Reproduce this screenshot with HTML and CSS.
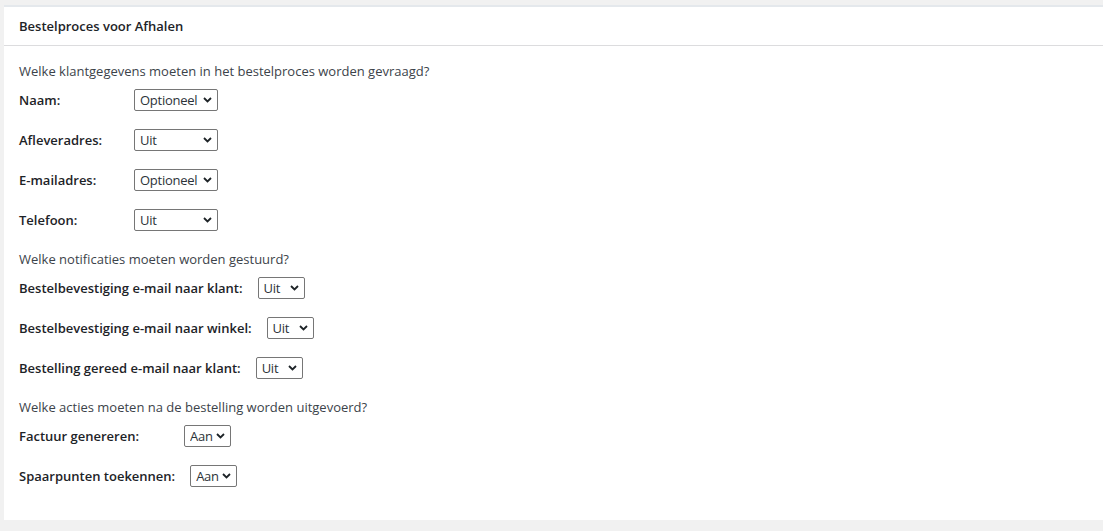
FILE: index.html
```html
<!DOCTYPE html>
<html lang="nl">
<head>
    <meta charset="UTF-8">
    <meta name="viewport" content="width=device-width, initial-scale=1.0">
    <title>Bestelproces voor Afhalen</title>
    <link rel="stylesheet" href="styles.css">
</head>
<body>
    <div class="settings-card">
        <h2 class="settings-title">Bestelproces voor Afhalen</h2>
        <div class="settings-body">
            <p class="settings-question">Welke klantgegevens moeten in het bestelproces worden gevraagd?</p>
            <div class="settings-row">
                <label class="settings-label wide" for="naam">Naam:</label>
                <select id="naam" class="settings-select large">
                    <option>Verplicht</option>
                    <option selected>Optioneel</option>
                    <option>Uit</option>
                </select>
            </div>
            <div class="settings-row">
                <label class="settings-label wide" for="adres">Afleveradres:</label>
                <select id="adres" class="settings-select large">
                    <option>Verplicht</option>
                    <option>Optioneel</option>
                    <option selected>Uit</option>
                </select>
            </div>
            <div class="settings-row">
                <label class="settings-label wide" for="email">E-mailadres:</label>
                <select id="email" class="settings-select large">
                    <option>Verplicht</option>
                    <option selected>Optioneel</option>
                    <option>Uit</option>
                </select>
            </div>
            <div class="settings-row">
                <label class="settings-label wide" for="telefoon">Telefoon:</label>
                <select id="telefoon" class="settings-select large">
                    <option>Verplicht</option>
                    <option>Optioneel</option>
                    <option selected>Uit</option>
                </select>
            </div>

            <p class="settings-question">Welke notificaties moeten worden gestuurd?</p>
            <div class="settings-row">
                <label class="settings-label" for="mailKlant">Bestelbevestiging e-mail naar klant:</label>
                <select id="mailKlant" class="settings-select">
                    <option>Aan</option>
                    <option selected>Uit</option>
                </select>
            </div>
            <div class="settings-row">
                <label class="settings-label" for="mailWinkel">Bestelbevestiging e-mail naar winkel:</label>
                <select id="mailWinkel" class="settings-select">
                    <option>Aan</option>
                    <option selected>Uit</option>
                </select>
            </div>
            <div class="settings-row">
                <label class="settings-label" for="mailGereed">Bestelling gereed e-mail naar klant:</label>
                <select id="mailGereed" class="settings-select">
                    <option>Aan</option>
                    <option selected>Uit</option>
                </select>
            </div>

            <p class="settings-question">Welke acties moeten na de bestelling worden uitgevoerd?</p>
            <div class="settings-row">
                <label class="settings-label invoice" for="factuur">Factuur genereren:</label>
                <select id="factuur" class="settings-select">
                    <option selected>Aan</option>
                    <option>Uit</option>
                </select>
            </div>
            <div class="settings-row">
                <label class="settings-label" for="spaarpunten">Spaarpunten toekennen:</label>
                <select id="spaarpunten" class="settings-select">
                    <option selected>Aan</option>
                    <option>Uit</option>
                </select>
            </div>
        </div>
    </div>
</body>
</html>
```

FILE: styles.css
```css
/* Page */
body {
    margin: 0;
    padding: 5px 0 11px 4px;
    background: #f1f1f1;
    font-family: 'Open Sans', 'Liberation Sans', sans-serif;
    font-size: 13px;
    color: #2c3338;
}

.settings-card {
    background: #fff;
    border-top: 2px solid #e4e8ec;
}

.settings-title {
    margin: 0;
    padding: 0 15px;
    height: 38px;
    line-height: 38px;
    font-size: 13px;
    font-weight: 600;
    color: #1d2327;
    border-bottom: 1px solid #dcdcde;
}

.settings-body {
    padding: 16px 15px 15px;
}

.settings-question {
    margin: 0 0 9px;
    line-height: 18px;
    color: #3c434a;
}

.settings-row + .settings-question {
    padding-top: 1px;
}

.settings-row {
    display: flex;
    align-items: center;
    height: 22px;
    margin-bottom: 18px;
}

.settings-label {
    font-weight: 600;
    color: #1d2327;
    margin-right: 15px;
}

.settings-label.wide {
    width: 100px;
}

.settings-label.invoice {
    width: 150px;
}

.settings-select {
    appearance: none;
    height: 22px;
    width: 47px;
    box-sizing: border-box;
    padding: 0 0 0 5px;
    font-family: 'Open Sans', 'Liberation Sans', sans-serif;
    font-size: 13px;
    letter-spacing: -0.25px;
    color: #2c3338;
    border: 1px solid #767676;
    border-radius: 2px;
    background: #fff url("data:image/svg+xml,%3Csvg xmlns='http://www.w3.org/2000/svg' width='9' height='6' viewBox='0 0 9 6'%3E%3Cpath d='M1 1l3.5 3.5L8 1' fill='none' stroke='%231d2327' stroke-width='1.8'/%3E%3C/svg%3E") no-repeat right 5px center;
}

.settings-select.large {
    width: 84px;
}
```
